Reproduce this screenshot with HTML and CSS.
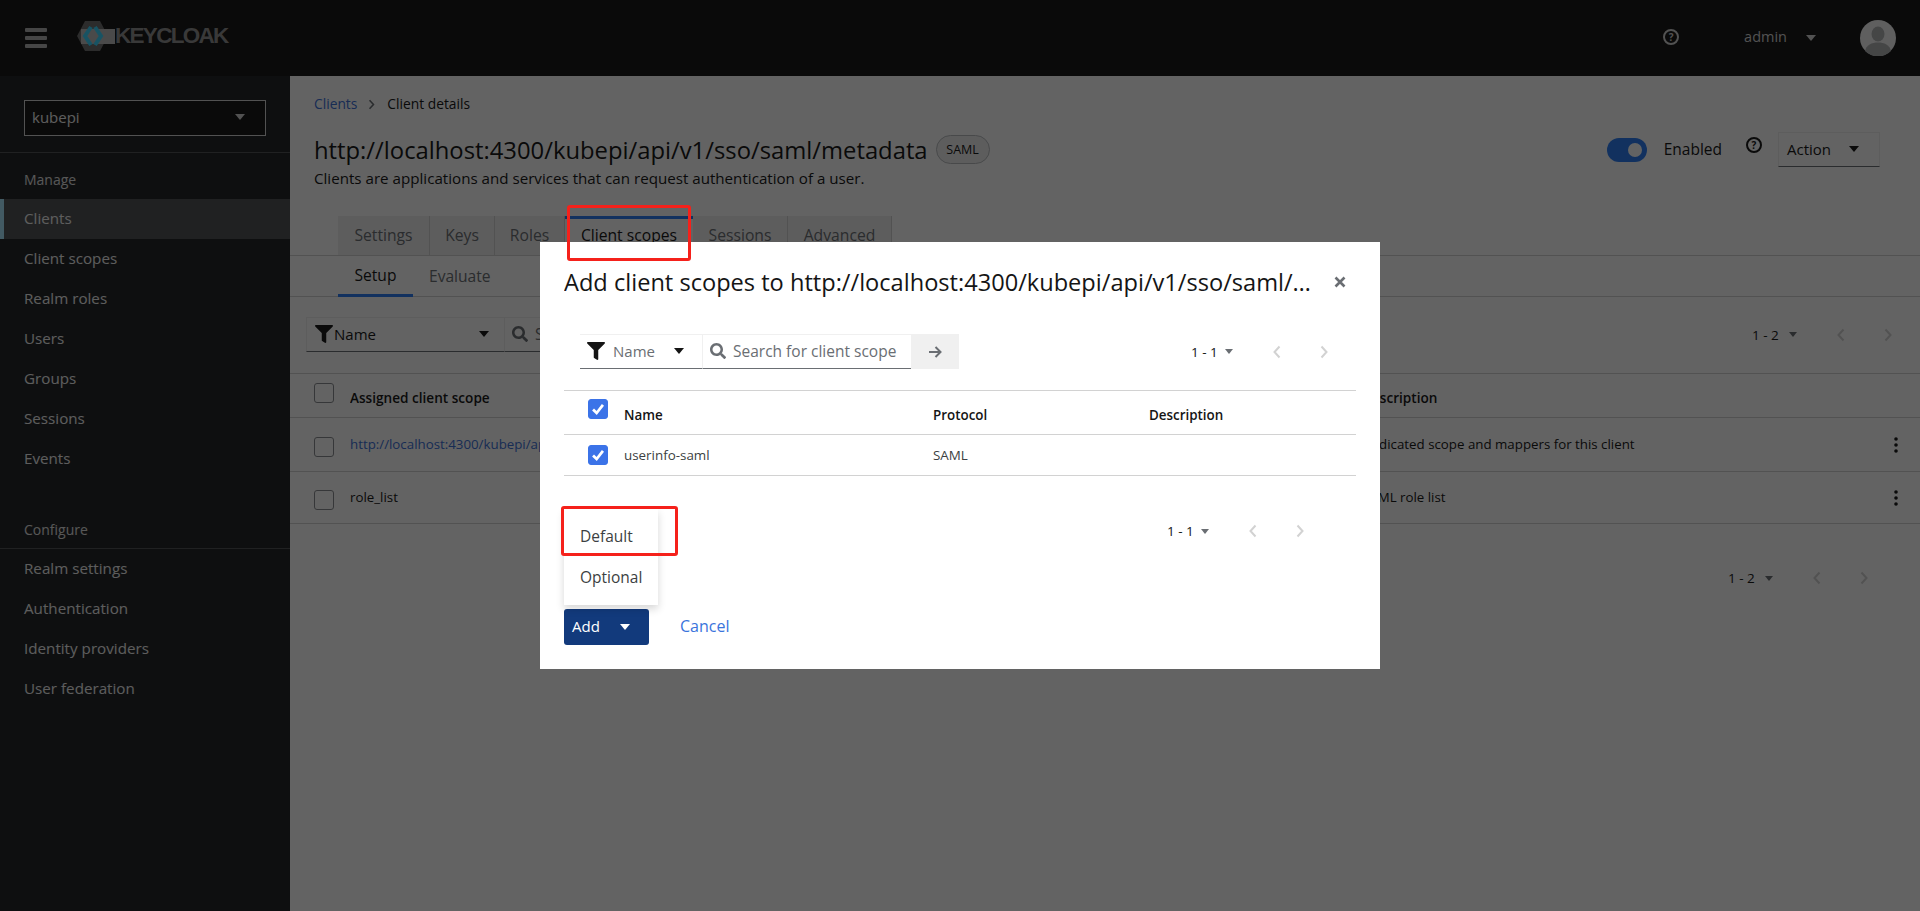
FILE: index.html
```html
<!DOCTYPE html>
<html lang="en">
<head>
<meta charset="utf-8">
<title>Keycloak</title>
<link rel="stylesheet" href="styles.css">
</head>
<body>
<svg class="defs" aria-hidden="true">
  <symbol id="i-filter" viewBox="0 0 512 512"><path d="M487.976 0H24.028C2.71 0-8.047 25.866 7.058 40.971L192 225.941V432c0 7.831 3.821 15.17 10.237 19.662l80 55.98C298.02 518.69 320 507.493 320 487.98V225.941l184.947-184.97C520.021 25.896 509.338 0 487.976 0z"/></symbol>
  <symbol id="i-search" viewBox="0 0 512 512"><path d="M505 442.7L405.3 343c-4.5-4.5-10.6-7-17-7H372c27.6-35.3 44-79.7 44-128C416 93.1 322.9 0 208 0S0 93.1 0 208s93.1 208 208 208c48.3 0 92.7-16.4 128-44v16.3c0 6.4 2.5 12.5 7 17l99.7 99.7c9.4 9.4 24.6 9.4 33.9 0l28.3-28.3c9.4-9.4 9.4-24.6.1-34zM208 336c-70.7 0-128-57.2-128-128 0-70.7 57.2-128 128-128 70.7 0 128 57.2 128 128 0 70.7-57.2 128-128 128z"/></symbol>
  <symbol id="i-caret" viewBox="0 0 10 6"><path d="M0 0h10L5 6z"/></symbol>
  <symbol id="i-left" viewBox="0 0 8 14"><path d="M6.5 1.5 1.5 7l5 5.5" fill="none" stroke="currentColor" stroke-width="2"/></symbol>
  <symbol id="i-right" viewBox="0 0 8 14"><path d="M1.5 1.5 6.5 7l-5 5.5" fill="none" stroke="currentColor" stroke-width="2"/></symbol>
  <symbol id="i-check" viewBox="0 0 20 20"><path d="M4.5 10.5 8.5 14.5 15.5 5.5" fill="none" stroke="#fff" stroke-width="3"/></symbol>
  <symbol id="i-kebab" viewBox="0 0 4 16"><circle cx="2" cy="2" r="1.8"/><circle cx="2" cy="8" r="1.8"/><circle cx="2" cy="14" r="1.8"/></symbol>
</svg>

<div class="app">
  <header class="masthead">
    <div class="burger"><span></span><span></span><span></span></div>
    <div class="logo">
      <svg class="logo-mark" viewBox="0 0 38 30">
        <path d="M0 15 8 0h15l8 15-8 15H8z" fill="#6e6e6e"/>
        <path d="M4 8h34v15H4z" fill="#bdbdbd"/>
        <path d="M14 6 8 15l6 9" fill="none" stroke="#3cd6ff" stroke-width="4"/>
        <path d="M18 6l6 9-6 9" fill="none" stroke="#3cd6ff" stroke-width="4"/>
      </svg>
      <span class="logo-text">KEYCLOAK</span>
    </div>
    <div class="mast-right">
      <span class="help help-light">?</span>
      <span class="user">admin</span>
      <svg class="caret caret-light"><use href="#i-caret"/></svg>
      <svg class="avatar" viewBox="0 0 36 36">
        <circle cx="18" cy="18" r="18" fill="#f4f4f4"/>
        <ellipse cx="18" cy="14" rx="6.500" ry="7.500" fill="#b0b2b4"/>
        <path d="M5 31c1-6 7-8.500 13-8.500S30 25 31 31a18 18 0 0 1-26 0z" fill="#b0b2b4"/>
      </svg>
    </div>
  </header>

  <div class="shell">
    <aside class="sidebar">
      <div class="realm-wrap">
        <div class="realm"><span>kubepi</span><svg class="caret caret-light"><use href="#i-caret"/></svg></div>
      </div>
      <nav class="nav">
        <div class="nav-title">Manage</div>
        <a class="nav-item is-current">Clients</a>
        <a class="nav-item">Client scopes</a>
        <a class="nav-item">Realm roles</a>
        <a class="nav-item">Users</a>
        <a class="nav-item">Groups</a>
        <a class="nav-item">Sessions</a>
        <a class="nav-item">Events</a>
        <div class="nav-title nav-title-rule">Configure</div>
        <a class="nav-item">Realm settings</a>
        <a class="nav-item">Authentication</a>
        <a class="nav-item">Identity providers</a>
        <a class="nav-item">User federation</a>
      </nav>
    </aside>

    <main class="main">
      <div class="crumbs"><a class="link">Clients</a><svg class="crumb-sep"><use href="#i-right"/></svg><span>Client details</span></div>
      <div class="title-row">
        <h1 class="page-title">http://localhost:4300/kubepi/api/v1/sso/saml/metadata</h1>
        <span class="badge">SAML</span>
        <div class="title-actions">
          <span class="toggle"><span class="knob"></span></span>
          <span class="enabled">Enabled</span>
          <span class="help help-raised">?</span>
          <div class="action"><span>Action</span><svg class="caret"><use href="#i-caret"/></svg></div>
        </div>
      </div>
      <p class="subtitle">Clients are applications and services that can request authentication of a user.</p>

      <div class="tabs">
        <span class="tab">Settings</span>
        <span class="tab">Keys</span>
        <span class="tab">Roles</span>
        <span class="tab is-active">Client scopes</span>
        <span class="tab">Sessions</span>
        <span class="tab">Advanced</span>
      </div>
      <div class="subtabs">
        <span class="subtab is-active">Setup</span>
        <span class="subtab">Evaluate</span>
      </div>

      <div class="toolbar">
        <div class="filter filter-wide"><svg class="ico-filter"><use href="#i-filter"/></svg><span>Name</span><svg class="caret"><use href="#i-caret"/></svg></div>
        <div class="search search-wide"><svg class="ico-search"><use href="#i-search"/></svg><span class="placeholder">Search for client scope</span></div>
        <div class="pager pager-top">
          <span class="count">1 - 2</span><svg class="caret caret-sm"><use href="#i-caret"/></svg>
          <span class="pg"><svg><use href="#i-left"/></svg></span><span class="pg"><svg><use href="#i-right"/></svg></span>
        </div>
      </div>

      <div class="table">
        <div class="tr th">
          <span class="cb"></span><span class="col-name">Assigned client scope</span><span class="col-desc">Description</span>
        </div>
        <div class="tr row-a">
          <span class="cb"></span><a class="col-name link">http://localhost:4300/kubepi/api/v1/sso/saml/metadata-dedicated</a><span class="col-desc">Dedicated scope and mappers for this client</span>
          <svg class="kebab"><use href="#i-kebab"/></svg>
        </div>
        <div class="tr row-b">
          <span class="cb"></span><span class="col-name">role_list</span><span class="col-desc">SAML role list</span>
          <svg class="kebab"><use href="#i-kebab"/></svg>
        </div>
      </div>

      <div class="pager pager-bottom">
        <span class="count">1 - 2</span><svg class="caret caret-sm"><use href="#i-caret"/></svg>
        <span class="pg"><svg><use href="#i-left"/></svg></span><span class="pg"><svg><use href="#i-right"/></svg></span>
      </div>
    </main>
  </div>
</div>

<div class="backdrop"></div>

<section class="modal">
  <div class="modal-head">
    <h2 class="modal-title">Add client scopes to http://localhost:4300/kubepi/api/v1/sso/saml/metadata</h2>
    <svg class="close" viewBox="0 0 12 12"><path d="M1.500 1.500l9 9M10.500 1.500l-9 9" fill="none" stroke="#6a6e73" stroke-width="2.600"/></svg>
  </div>

  <div class="m-toolbar">
    <div class="filter filter-narrow"><svg class="ico-filter"><use href="#i-filter"/></svg><span class="muted">Name</span><svg class="caret"><use href="#i-caret"/></svg></div>
    <div class="search search-narrow"><svg class="ico-search"><use href="#i-search"/></svg><span class="placeholder">Search for client scope</span></div>
    <div class="go"><svg viewBox="0 0 14 14"><path d="M1 7h11M7.500 2l5 5-5 5" fill="none" stroke="#6a6e73" stroke-width="2"/></svg></div>
    <div class="pager pager-m1">
      <span class="count">1 - 1</span><svg class="caret caret-sm"><use href="#i-caret"/></svg>
      <span class="pg"><svg><use href="#i-left"/></svg></span><span class="pg"><svg><use href="#i-right"/></svg></span>
    </div>
  </div>

  <div class="m-table">
    <div class="m-tr m-th">
      <span class="cb cb-on"><svg><use href="#i-check"/></svg></span><span>Name</span><span>Protocol</span><span>Description</span>
    </div>
    <div class="m-tr">
      <span class="cb cb-on"><svg><use href="#i-check"/></svg></span><span>userinfo-saml</span><span>SAML</span><span></span>
    </div>
  </div>

  <div class="pager pager-m2">
    <span class="count">1 - 1</span><svg class="caret caret-sm"><use href="#i-caret"/></svg>
    <span class="pg"><svg><use href="#i-left"/></svg></span><span class="pg"><svg><use href="#i-right"/></svg></span>
  </div>

  <div class="m-foot">
    <ul class="menu">
      <li>Default</li>
      <li>Optional</li>
    </ul>
    <button class="btn-add">Add<svg class="caret caret-white"><use href="#i-caret"/></svg></button>
    <a class="cancel">Cancel</a>
  </div>
</section>

<div class="mark mark-tab"></div>
<div class="mark mark-menu"></div>
</body>
</html>
```
FILE: styles.css
```css
* { box-sizing: border-box; }
html, body { margin: 0; height: 100%; }
body {
  font-family: "Open Sans", "Noto Sans", sans-serif;
  font-size: 14px;
  color: #151515;
  background: #fff;
  overflow: hidden;
}
.defs { display: none; }
.link { color: #3a70d8; }

.app { display: flex; flex-direction: column; height: 911px; }

/* masthead */
.masthead {
  flex: 0 0 76px;
  display: flex;
  align-items: center;
  background: #151515;
  padding-left: 25px;
}
.burger { width: 22px; display: flex; flex-direction: column; gap: 4px; }
.burger span { height: 4px; background: #b4b4b4; border-radius: 1px; }
.logo { display: flex; align-items: center; margin-left: 30px; margin-top: -4px; }
.logo-mark { width: 38px; height: 30px; flex: none; }
.logo-text {
  font-family: "Liberation Sans", sans-serif;
  font-weight: 700;
  font-size: 22.500px;
  letter-spacing: -1.700px;
  color: #909090;
}
.mast-right { margin-left: auto; display: flex; align-items: center; padding-right: 24px; }
.help {
  width: 14px; height: 14px;
  border: 2px solid #151515;
  border-radius: 50%;
  font-size: 10px;
  font-weight: 700;
  line-height: 10px;
  text-align: center;
}
.help-light { border-color: #d2d2d2; color: #d2d2d2; width: 16px; height: 16px; line-height: 12px; margin-top: -2px; }
.user { margin-left: 65px; color: #d2d2d2; font-size: 14.500px; padding-bottom: 3px; }
.caret { width: 10px; height: 6px; fill: #151515; display: block; flex: none; }
.caret-light { fill: #d2d2d2; }
.mast-right .caret { margin-left: 19px; }
.avatar { width: 36px; height: 36px; margin-left: 44px; }

/* shell */
.shell { flex: 1; display: flex; min-height: 0; }

/* sidebar */
.sidebar { flex: 0 0 290px; background: #212427; color: #f0f0f0; }
.realm-wrap { padding: 24px 24px 16px; border-bottom: 1px solid #4f5255; }
.realm {
  height: 36px;
  width: 242px;
  display: flex;
  align-items: center;
  justify-content: space-between;
  padding: 0 20px 2px 7px;
  background: #151515;
  border: 1px solid #d2d2d2;
  font-size: 15px;
}
.nav-title { padding: 6px 0 0 24px; height: 46px; display: flex; align-items: center; font-size: 14px; color: #e0e0e0; }
.nav-item {
  display: flex;
  align-items: center;
  height: 40px;
  padding: 0 0 2px 24px;
  font-size: 15.200px;
  color: #f0f0f0;
}
.nav-item.is-current { background: #4f5255; box-shadow: inset 4px 0 0 #a8e6ff; }
.nav-title-rule { margin-top: 32px; height: 38px; padding-top: 0; border-bottom: 1px solid #4f5255; }

/* main */
.main { flex: 1; min-width: 0; padding-top: 18px; }
.crumbs { height: 21px; display: flex; align-items: center; padding: 0 0 2px 24px; font-size: 13.800px; margin-bottom: 17px; }
.crumb-sep { width: 7px; height: 11px; margin: 2px 12px 0 11px; color: #6a6e73; }
.title-row { height: 35px; display: flex; align-items: center; padding-left: 24px; }
.page-title { margin: 0; font-size: 23.800px; font-weight: 400; white-space: nowrap; }
.badge {
  margin-left: 8px;
  height: 29px;
  width: 54px;
  border: 1px solid #b8bbbe;
  border-radius: 15px;
  background: #f0f0f0;
  font-size: 12.500px;
  display: flex;
  align-items: center;
  justify-content: center;
  color: #151515;
}
.title-actions { margin-left: auto; display: flex; align-items: center; padding-right: 40px; }
.toggle {
  width: 40px; height: 24px;
  border-radius: 12px;
  background: #2a7df5;
  display: flex; align-items: center; justify-content: flex-end;
  padding-right: 5px;
}
.knob { width: 14px; height: 14px; border-radius: 50%; background: #fff; }
.enabled { margin-left: 17px; font-size: 15.500px; padding-bottom: 2px; }
.help-raised { margin-left: 24px; margin-top: -9px; flex: none; width: 16px; height: 16px; line-height: 12px; }
.action {
  margin-left: 16px;
  width: 102px;
  height: 35px;
  display: flex;
  align-items: center;
  justify-content: space-between;
  padding: 0 20px 2px 8px;
  border: 1px solid #f0f0f0;
  border-bottom-color: #6a6e73;
  font-size: 15px;
}
.subtitle { margin: 0 0 25px; padding-left: 24px; height: 24px; line-height: 22px; font-size: 15.150px; }

.tabs {
  display: grid;
  grid-template-columns: 92px 65px 70px 128px 95px 104px;
  height: 40px;
  padding-left: 48px;
  border-bottom: 1px solid #d2d2d2;
  width: 100%;
  justify-content: start;
}
.tab {
  display: flex; align-items: center; justify-content: center;
  padding-bottom: 2px;
  background: #f0f0f0;
  border-right: 1px solid #d2d2d2;
  color: #6a6e73;
  font-size: 15.700px;
}
.tab.is-active { background: #fff; color: #151515; border-top: 3px solid #2a7df5; border-right: 0; margin-bottom: -1px; padding-bottom: 5px; }
.subtabs { display: flex; height: 41px; padding-left: 48px; border-bottom: 1px solid #d2d2d2; }
.subtab { display: flex; align-items: center; justify-content: center; padding: 0 16px; font-size: 15.600px; color: #6a6e73; }
.subtab.is-active { width: 75px; color: #151515; border-bottom: 3px solid #2a7df5; margin-bottom: -1px; }

.toolbar { display: flex; align-items: center; height: 35px; margin: 20px 0 21px; padding-left: 16px; padding-right: 9px; }
.filter {
  height: 35px;
  display: flex;
  align-items: center;
  padding-bottom: 2px;
  border: 1px solid #f0f0f0;
  border-bottom-color: #6a6e73;
  font-size: 15px;
}
.filter-wide { width: 199px; padding-left: 8px; }
.ico-filter { width: 18px; height: 18px; fill: #151515; flex: none; }
.filter-wide .ico-filter { margin-right: 1px; }
.filter .caret { margin-left: auto; margin-right: 15px; }
.search {
  height: 35px;
  display: flex;
  align-items: center;
  padding-bottom: 2px;
  border-top: 1px solid #f0f0f0;
  border-bottom: 1px solid #6a6e73;
}
.ico-search { width: 16px; height: 16px; fill: #6a6e73; flex: none; }
.search-wide { width: 300px; padding-left: 7px; }
.placeholder { margin-left: 7px; color: #6a6e73; font-size: 15.500px; white-space: nowrap; }

.pager { display: flex; align-items: center; font-size: 14px; }
.pager-top { margin-left: auto; }
.count { width: 34px; white-space: nowrap; font-size: 13.500px; }
.pager-top .count, .pager-bottom .count { width: 37px; }
.caret-sm { width: 8px; height: 5px; margin-right: 20px; fill: #6a6e73; }
.pg { width: 47px; display: flex; justify-content: center; color: #d2d2d2; }
.pg svg { width: 8px; height: 14px; }

.table { border-top: 1px solid #d2d2d2; }
.tr {
  display: flex;
  align-items: center;
  padding: 0 0 2px 24px;
  border-bottom: 1px solid #d2d2d2;
  font-size: 13.300px;
}
.th { height: 44px; font-weight: 600; font-size: 13.600px; padding: 4px 0 0 24px; }
.row-a { height: 54px; }
.row-b { height: 52px; }
.cb { width: 20px; height: 20px; border: 1px solid #8a8d90; border-radius: 3px; flex: none; background: #fff; margin-top: 6px; }
.th .cb { margin-top: -10px; }
.col-name { width: 1012px; margin-left: 16px; white-space: nowrap; overflow: hidden; }
.col-desc { white-space: nowrap; }
.kebab { width: 4px; height: 16px; fill: #151515; margin-left: auto; margin-right: 22px; margin-top: 2px; }

.pager-bottom { justify-content: flex-end; margin-top: 45px; padding-right: 33px; }

/* backdrop + modal */
.backdrop { position: fixed; inset: 0; background: rgba(3, 3, 3, .62); }
.modal {
  position: fixed;
  left: 540px;
  top: 242px;
  width: 840px;
  height: 427px;
  background: #fff;
  padding: 22px 24px 0;
}
.modal-head { display: flex; align-items: center; height: 36px; }
.modal-title {
  margin: 0;
  width: 752px;
  font-size: 23.600px;
  font-weight: 400;
  white-space: nowrap;
  overflow: hidden;
  text-overflow: ellipsis;
}
.close { width: 12px; height: 12px; margin-left: 18px; }
.m-toolbar { display: flex; align-items: center; height: 35px; margin: 34px 0 21px; padding-left: 16px; }
.filter-narrow { width: 122px; padding-left: 7px; border-width: 1px 0 1px 0; }
.filter-narrow .ico-filter { margin-right: 8px; }
.filter-narrow .caret { margin-right: 18px; }
.muted { color: #6a6e73; }
.search-narrow { width: 209px; padding-left: 7px; border-left: 1px solid #f0f0f0; }
.go { width: 48px; height: 35px; background: #f0f0f0; display: flex; align-items: center; justify-content: center; }
.go svg { width: 14px; height: 14px; }
.pager-m1 { margin-left: auto; padding-right: 9px; }
.m-table { border-top: 1px solid #d2d2d2; width: 792px; }
.m-tr {
  display: grid;
  grid-template-columns: 36px 309px 216px 1fr;
  align-items: center;
  height: 41px;
  padding: 0 0 0 24px;
  border-bottom: 1px solid #d2d2d2;
  font-size: 13.400px;
  color: #3c3f42;
}
.m-th { height: 44px; padding-top: 4px; font-weight: 600; color: #151515; }
.m-tr .cb { margin-top: 0; }
.m-th .cb { margin-top: -12px; }
.cb-on { background: #3b73e8; border-color: #3b73e8; display: block; }
.cb-on svg { display: block; width: 18px; height: 18px; }
.pager-m2 { justify-content: flex-end; margin-top: 37px; height: 36px; padding-right: 33px; }
.m-foot { position: relative; display: flex; align-items: center; margin-top: 60px; height: 36px; }
.menu {
  position: absolute;
  left: 0;
  bottom: 40px;
  width: 94px;
  height: 96px;
  margin: 0;
  padding: 7px 0 0;
  list-style: none;
  background: #fff;
  box-shadow: 0 4px 8px rgba(3, 3, 3, .16);
}
.menu li { height: 41px; display: flex; align-items: center; padding: 0 0 2px 16px; font-size: 15.500px; color: #3c3f42; }
.btn-add {
  width: 85px;
  height: 36px;
  border: 0;
  border-radius: 3px;
  background: #123a7c;
  color: #fff;
  font: inherit;
  font-size: 15px;
  display: flex;
  align-items: center;
  padding: 0 0 2px 8px;
}
.caret-white { fill: #fff; margin-left: 20px; margin-top: 2px; }
.cancel { margin-left: 31px; color: #3a74dc; font-size: 16px; padding-bottom: 3px; }

/* annotation boxes */
.mark { position: fixed; border: 3px solid #f5211b; border-radius: 3px; }
.mark-tab { left: 567px; top: 205px; width: 124px; height: 56px; }
.mark-menu { left: 561px; top: 506px; width: 117px; height: 50px; }
```
